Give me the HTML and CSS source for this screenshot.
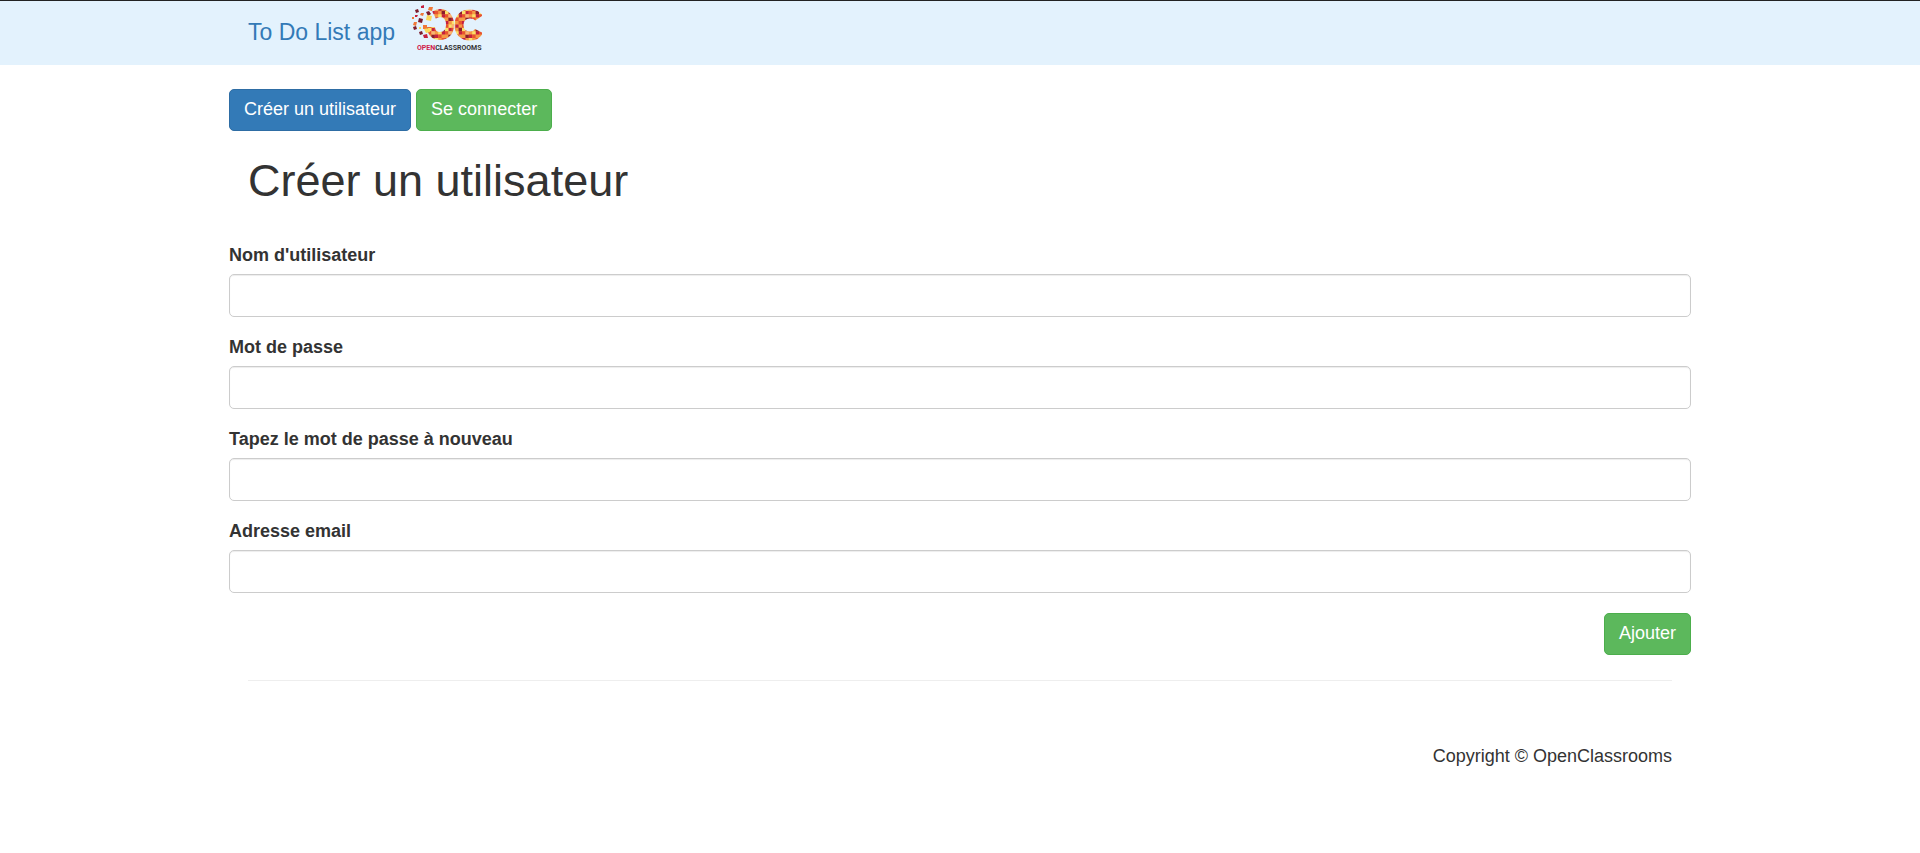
FILE: index.html
```html
<!DOCTYPE html>
<html lang="fr">
<head>
<meta charset="utf-8">
<meta name="viewport" content="width=device-width, initial-scale=1">
<title>To Do List app</title>
<link rel="stylesheet" href="styles.css">
</head>
<body>
<header class="navbar">
  <div class="container navbar-inner">
    <a class="brand" href="#">To Do List app</a>
    <svg class="logo" viewBox="0 0 72 48" role="img" aria-label="OpenClassrooms">
      <defs>
        <pattern id="mosaic" width="20" height="20" patternUnits="userSpaceOnUse" patternTransform="scale(.85)">
          <rect width="20" height="20" fill="#f59a45"/>
          <path fill="#c5203f" d="M0 0h4v4h-4zM12 4h4v4h-4zM4 8h4v4h-4zM16 12h4v4h-4zM8 16h4v4h-4z"/>
          <path fill="#fbe069" d="M8 0h4v4h-4zM0 8h4v4h-4zM12 12h4v4h-4zM4 4h4v4h-4z"/>
          <path fill="#e8542f" d="M16 0h4v4h-4zM8 8h4v4h-4zM0 12h4v4h-4zM12 16h4v4h-4zM0 4h4v4h-4z"/>
          <path fill="#8c1c2c" d="M16 8h4v4h-4zM4 16h4v4h-4z"/>
          <path fill="#fab473" d="M8 4h4v4h-4zM4 12h4v4h-4z"/>
        </pattern>
        <mask id="letters" maskUnits="userSpaceOnUse" x="0" y="0" width="72" height="48">
          <path fill="none" stroke="#fff" stroke-width="8" d="M23 11c2-1 4-2 6-2 6 0 10 5 10 12s-4 11-10 11c-5 0-9-3-9-9"/>
          <path fill="none" stroke="#fff" stroke-width="9" d="M68 14c-2-3-5-4-9-4-7 0-11 4-11 11s4 11 11 11c4 0 7-1 9-5"/>
        </mask>
      </defs>
      <rect x="12" y="5" width="59" height="32" fill="url(#mosaic)" mask="url(#letters)"/>
      <path fill="#7c1c2c" d="M4 6l3-1 1 3-3 1zM15 8l3-1 2 3-3 2zM8 14l4 1-1 4-4-1zM2 23l3-1 1 3-3 1zM8 28l3-1 1 3-3 1z"/>
      <path fill="#c5203f" d="M10 2l3-1 0 3-3 0zM4 11l3 0-1 2-2 0zM12 31l4-1 1 4-4 0z"/>
      <path fill="#f07838" d="M18 3l4 0-1 4-4-1zM6 18l-1 4-3-1 1-3zM12 21l4 0 0 4-4 0zM10 9l3 0-1 3-3-1zM1 13l2 0 0 2-2 0z"/>
      <path fill="#fbd95b" d="M16 11l5 1-1 5-5-1zM13 25l5-1 1 4-4 1zM8 23l2 0 0 2-2 0z"/>
      <text class="logo-text" x="6" y="46"><tspan class="logo-open">OPEN</tspan>CLASSROOMS</text>
    </svg>
  </div>
</header>
<main class="container">
  <nav class="actions">
    <a class="btn btn-primary" href="#">Créer un utilisateur</a>
    <a class="btn btn-success" href="#">Se connecter</a>
  </nav>
  <h1 class="title">Créer un utilisateur</h1>
  <form class="form">
    <div class="fields">
      <div class="field">
        <label for="username">Nom d'utilisateur</label>
        <input id="username" type="text">
      </div>
      <div class="field">
        <label for="password">Mot de passe</label>
        <input id="password" type="password">
      </div>
      <div class="field">
        <label for="password-again">Tapez le mot de passe à nouveau</label>
        <input id="password-again" type="password">
      </div>
      <div class="field">
        <label for="email">Adresse email</label>
        <input id="email" type="email">
      </div>
    </div>
    <button class="btn btn-success submit" type="submit">Ajouter</button>
  </form>
  <footer class="footer">Copyright © OpenClassrooms</footer>
</main>
</body>
</html>
```
FILE: styles.css
```css
* {
  box-sizing: border-box;
}

body {
  margin: 0;
  background: #fff;
  color: #333;
  font: 18px/25px "Liberation Sans", Arial, sans-serif;
}

.container {
  max-width: 1462px;
  margin: 0 auto;
}

.navbar {
  border-top: 1px solid #222;
  background: #e3f2fd;
}

.navbar-inner {
  display: flex;
  align-items: flex-start;
  gap: 16px;
  height: 64px;
  padding: 3px 19px;
}

.brand {
  color: #337ab7;
  font-size: 23px;
  line-height: 56px;
  text-decoration: none;
}

.logo {
  width: 72px;
  height: 48px;
}

.logo-text {
  fill: #333;
  font: 700 7px Roboto, sans-serif;
}

.logo-open {
  fill: #d0204a;
}

.actions {
  display: flex;
  gap: 5px;
  padding-top: 24px;
}

.btn {
  padding: 7px 14px 8px;
  border: 1px solid;
  border-radius: 5px;
  color: #fff;
  font: inherit;
  text-decoration: none;
  cursor: pointer;
}

.btn-primary {
  background: #337ab7;
  border-color: #2e6da4;
}

.btn-success {
  background: #5cb85c;
  border-color: #4cae4c;
}

.title {
  margin: 25px 19px 37px;
  font-size: 45px;
  font-weight: 500;
  line-height: 50px;
}

.form {
  display: flex;
  flex-direction: column;
  gap: 20px;
}

.fields {
  display: flex;
  flex-direction: column;
  gap: 18px;
}

.field {
  display: flex;
  flex-direction: column;
  gap: 6px;
}

.field label {
  font-weight: 700;
}

.field input {
  height: 43px;
  padding: 8px 14px;
  border: 1px solid #ccc;
  border-radius: 5px;
  background: #fff;
  box-shadow: inset 0 1px 1px rgba(0, 0, 0, 0.075);
  color: #555;
  font: inherit;
}

.submit {
  align-self: flex-end;
}

.footer {
  margin: 25px 19px 0;
  padding: 63px 0;
  border-top: 1px solid #eee;
  text-align: right;
}
```
